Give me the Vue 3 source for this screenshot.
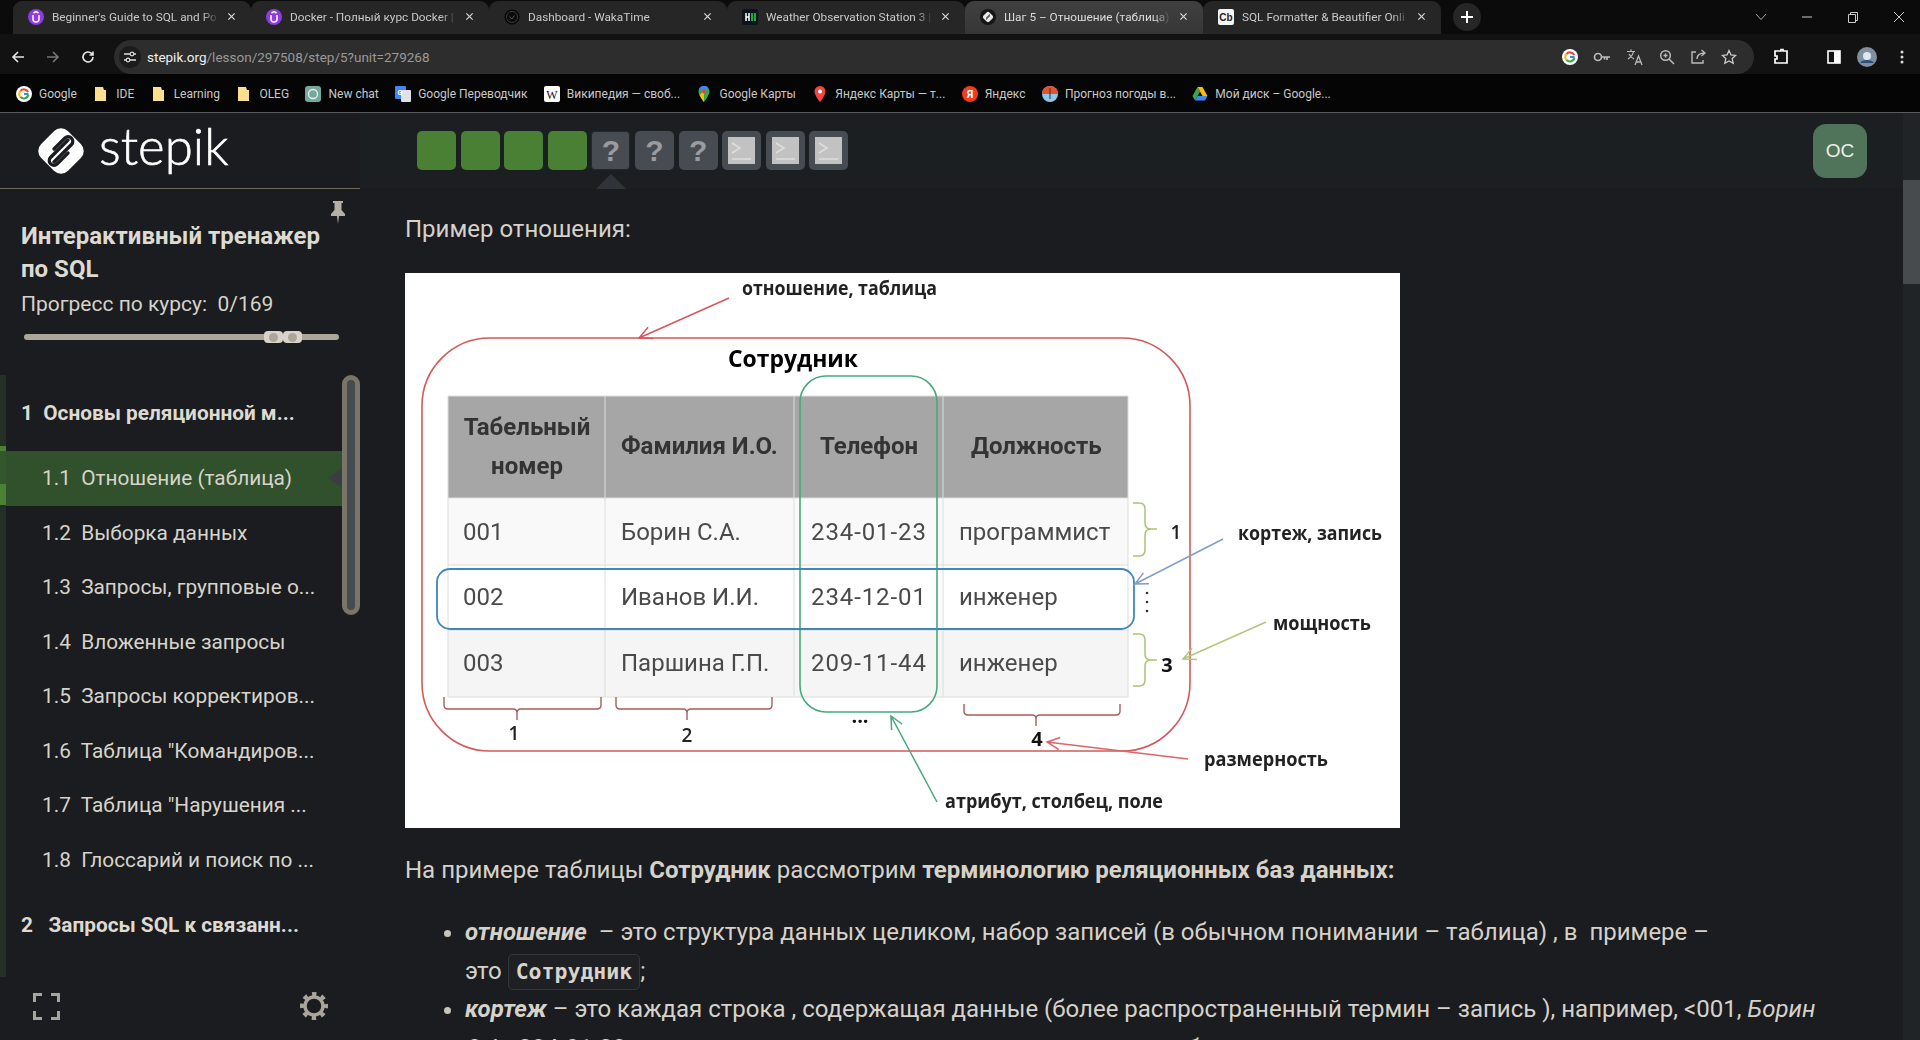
<template>
  <div class="page">
    <!-- browser chrome -->
    <div class="tabstrip">
      <div
        v-for="tab in tabs"
        :key="tab.title"
        class="tab"
        :class="{ active: tab.active }"
      >
        <svg class="favicon" viewBox="0 0 16 16">
          <template v-if="tab.icon === 'udemy'">
            <circle cx="8" cy="8" r="8" fill="#8c3ce0" />
            <path d="M5 6v4a3 3 0 0 0 6 0V6M5.5 4 8 2.6 10.5 4" fill="none" stroke="#fff" stroke-width="1.5" />
          </template>
          <template v-else-if="tab.icon === 'waka'">
            <circle cx="8" cy="8" r="7" fill="#0b0b0b" stroke="#000" />
            <circle cx="8" cy="8" r="5.6" fill="none" stroke="#3a3a3a" stroke-width="1" />
            <path d="M5.5 7.5 8 10l2.5-3.5" fill="none" stroke="#555" stroke-width="1" />
          </template>
          <template v-else-if="tab.icon === 'hr'">
            <rect width="16" height="16" rx="2" fill="#0e141e" />
            <path d="M4 4v8M7 4v8M4 8h3" stroke="#fff" stroke-width="1.5" />
            <path d="M10 4v8M13 4v8" stroke="#1ba94c" stroke-width="2" />
          </template>
          <template v-else-if="tab.icon === 'stepik'">
            <circle cx="8" cy="8" r="8" fill="#151515" />
            <rect x="3.8" y="3.8" width="8.4" height="8.4" rx="2" transform="rotate(45 8 8)" fill="#e8e8e8" />
            <path d="M10 5.5 6.2 9.2M9.800 6.800 6 10.500" stroke="#222" stroke-width="1" />
          </template>
          <template v-else>
            <rect width="16" height="16" rx="2" fill="#f5f5f5" />
            <text x="8" y="12" class="cb">Cb</text>
          </template>
        </svg>
        <span class="tab-title">{{ tab.title }}</span>
        <svg class="tab-close" viewBox="0 0 10 10"><path d="M1.5 1.5l7 7M8.5 1.5l-7 7" stroke="#d8d8d8" stroke-width="1.3" /></svg>
      </div>
      <div class="newtab">
        <svg viewBox="0 0 14 14" width="14" height="14"><path d="M7 1v12M1 7h12" stroke="#fff" stroke-width="2" /></svg>
      </div>
      <div class="window-btns">
        <svg viewBox="0 0 12 8" width="12" height="8"><path d="M1 1l5 5.5L11 1" fill="none" stroke="#aaa" /></svg>
        <svg viewBox="0 0 12 12" width="12" height="12"><path d="M1 6h10" stroke="#ccc" /></svg>
        <svg viewBox="0 0 12 12" width="12" height="12"><path d="M1.5 3.5h7v8h-7zM3.5 3.5v-2h7v8h-2" fill="none" stroke="#ccc" /></svg>
        <svg viewBox="0 0 12 12" width="12" height="12"><path d="M1 1l10 10M11 1L1 11" stroke="#ccc" /></svg>
      </div>
    </div>

    <div class="toolbar">
      <svg class="nav-icon" viewBox="0 0 14 14"><path d="M13 7H2M7 2 2 7l5 5" fill="none" stroke="#e6e6e6" stroke-width="1.6" /></svg>
      <svg class="nav-icon" viewBox="0 0 14 14"><path d="M1 7h11M7 2l5 5-5 5" fill="none" stroke="#777" stroke-width="1.6" /></svg>
      <svg class="nav-icon" viewBox="0 0 14 14"><path d="M12 7a5 5 0 1 1-1.5-3.600L12 5M12 1.500V5H8.500" fill="none" stroke="#e6e6e6" stroke-width="1.6" /></svg>
      <div class="urlbar">
        <span class="site-info">
          <svg viewBox="0 0 14 14" width="14" height="14"><path d="M1 4h6M11 4h2M1 10h2M7 10h6" stroke="#ddd" stroke-width="1.3" fill="none" /><circle cx="9" cy="4" r="1.8" stroke="#ddd" fill="none" stroke-width="1.2" /><circle cx="5" cy="10" r="1.8" stroke="#ddd" fill="none" stroke-width="1.2" /></svg>
        </span>
        <span class="url"><span class="host">stepik.org</span>/lesson/297508/step/5?unit=279268</span>
        <span class="url-icons">
          <svg viewBox="0 0 16 16" width="16" height="16"><circle cx="8" cy="8" r="8" fill="#fff" /><path d="M12.5 8H8" stroke="#4285f4" stroke-width="2" /><path d="M12.2 6A4.600 4.600 0 0 0 4.500 5" fill="none" stroke="#ea4335" stroke-width="2" /><path d="M4.5 5a4.600 4.600 0 0 0 0 6" fill="none" stroke="#fbbc05" stroke-width="2" /><path d="M4.5 11a4.600 4.600 0 0 0 7.900-2.500" fill="none" stroke="#34a853" stroke-width="2" /></svg>
          <svg viewBox="0 0 18 12" width="18" height="12"><circle cx="5" cy="6" r="3.5" fill="none" stroke="#bbb" stroke-width="1.7" /><path d="M8.5 6h8.500M14 6v3M11.500 6v2.500" stroke="#bbb" stroke-width="1.7" /></svg>
          <svg viewBox="0 0 18 18" width="18" height="18"><path d="M1 3.5h8M5 1.500v2M7.500 3.500C7 6.500 5 9 2 11M3 6c1 2 3 4 5 5" fill="none" stroke="#bbb" stroke-width="1.2" /><path d="M9 17l3.5-9 3.5 9M10.300 14h4.400" fill="none" stroke="#bbb" stroke-width="1.3" /></svg>
          <svg viewBox="0 0 16 16" width="16" height="16"><circle cx="6.5" cy="6.5" r="4.8" fill="none" stroke="#bbb" stroke-width="1.5" /><path d="M10 10l5 5M4.500 6.500h4M6.500 4.500v4" stroke="#bbb" stroke-width="1.5" /></svg>
          <svg viewBox="0 0 16 16" width="16" height="16"><path d="M6 3H2v11h11v-3M7 10c0-4 2-6 8-6M11.500 1 15 4l-3.500 3" fill="none" stroke="#bbb" stroke-width="1.4" /></svg>
          <svg viewBox="0 0 16 16" width="16" height="16"><path d="M8 1.5l2 4.400 4.700.5-3.500 3.200 1 4.700L8 11.900l-4.200 2.400 1-4.700L1.300 6.400 6 5.900z" fill="none" stroke="#ccc" stroke-width="1.3" /></svg>
        </span>
      </div>
      <div class="tool-right">
        <svg viewBox="0 0 16 18" width="16" height="18"><path d="M5 3h3V1.500h2V3h4v12H2v-4h2V8H2V3z" fill="none" stroke="#fff" stroke-width="1.7" /></svg>
        <svg class="panel-icon" viewBox="0 0 14 14" width="14" height="14"><rect x="1" y="1" width="12" height="12" fill="none" stroke="#fff" stroke-width="1.6" /><rect x="7" y="1" width="6" height="12" fill="#fff" /></svg>
        <svg class="profile-icon" viewBox="0 0 20 20" width="20" height="20"><circle cx="10" cy="10" r="10" fill="#8090a0" /><circle cx="10" cy="9" r="4" fill="#dfe6ee" /><path d="M3 16c2-4 12-4 14 0" fill="#28507c" /></svg>
        <svg class="dots-icon" viewBox="0 0 4 14" width="4" height="14"><circle cx="2" cy="2" r="1.5" fill="#ddd" /><circle cx="2" cy="7" r="1.5" fill="#ddd" /><circle cx="2" cy="12" r="1.5" fill="#ddd" /></svg>
      </div>
    </div>

    <div class="bookmarks">
      <div v-for="b in bookmarks" :key="b.title" class="bookmark">
        <svg class="favicon" viewBox="0 0 16 16">
          <template v-if="b.icon === 'google'">
            <circle cx="8" cy="8" r="8" fill="#fff" />
            <path d="M12.5 8H8" stroke="#4285f4" stroke-width="2" /><path d="M12.2 6A4.600 4.600 0 0 0 4.500 5" fill="none" stroke="#ea4335" stroke-width="2" /><path d="M4.5 5a4.600 4.600 0 0 0 0 6" fill="none" stroke="#fbbc05" stroke-width="2" /><path d="M4.5 11a4.600 4.600 0 0 0 7.900-2.500" fill="none" stroke="#34a853" stroke-width="2" />
          </template>
          <path v-else-if="b.icon === 'folder'" d="M2 1h8l1 3h2v11H2z" fill="#fbdf8f" />
          <template v-else-if="b.icon === 'gpt'">
            <rect width="16" height="16" rx="3" fill="#74aa9c" />
            <circle cx="8" cy="8" r="4.5" fill="none" stroke="#e8f0ee" stroke-width="1.3" />
          </template>
          <template v-else-if="b.icon === 'translate'">
            <rect width="11" height="13" rx="1" fill="#4285f4" />
            <rect x="6" y="4" width="10" height="12" rx="1" fill="#dfe3e8" />
            <text x="5" y="9" class="mini">G</text>
          </template>
          <template v-else-if="b.icon === 'wiki'">
            <rect width="16" height="16" rx="2" fill="#fff" />
            <text x="8" y="12.5" class="wiki">W</text>
          </template>
          <template v-else-if="b.icon === 'maps'">
            <path d="M8 0a5.5 5.5 0 0 0-5.5 5.5C2.5 9.500 8 16 8 16s5.500-6.500 5.500-10.500A5.500 5.500 0 0 0 8 0z" fill="#34a853" />
            <path d="M3 3a5.5 5.5 0 0 1 9-1.500L8 6z" fill="#4285f4" />
            <path d="M8 16S5 12.500 3.500 9L8 5z" fill="#fbbc05" />
            <circle cx="8" cy="5.5" r="2" fill="#ea4335" />
          </template>
          <template v-else-if="b.icon === 'ymaps'">
            <path d="M8 0a5.5 5.5 0 0 0-5.5 5.5C2.5 9.500 8 16 8 16s5.500-6.500 5.500-10.500A5.500 5.500 0 0 0 8 0z" fill="#f2453d" />
            <circle cx="8" cy="5.5" r="2" fill="#fff" />
          </template>
          <template v-else-if="b.icon === 'yandex'">
            <circle cx="8" cy="8" r="8" fill="#f33b1d" />
            <text x="8" y="12" class="ya">Я</text>
          </template>
          <template v-else-if="b.icon === 'weather'">
            <circle cx="8" cy="8" r="8" fill="#8dc8ec" />
            <path d="M0 8a8 8 0 0 1 16 0z" fill="#e2542f" />
            <path d="M8 2v11" stroke="#333" stroke-width="1" />
          </template>
          <template v-else>
            <path d="M5.5 1h5l5 9h-5z" fill="#fbbc05" />
            <path d="M5.5 1 0.5 10l2.500 4.500 5-9z" fill="#34a853" />
            <path d="M3 14.5h10l2.500-4.500h-10z" fill="#4285f4" />
          </template>
        </svg>
        <span>{{ b.title }}</span>
      </div>
    </div>

    <div class="body">
      <aside class="sidebar">
        <div class="logo">
          <svg class="logo-mark" viewBox="0 0 48 48">
            <rect x="5" y="5" width="38" height="38" rx="10" transform="rotate(45 24 24)" fill="#fff" />
            <path d="M31 13 13.5 30.500A4.600 4.600 0 0 0 20 37L31 26" fill="none" stroke="#1a1c1f" stroke-width="3.4" stroke-linecap="round" />
            <path d="M17 35 34.5 17.500A4.600 4.600 0 0 0 28 11L17 22" fill="none" stroke="#1a1c1f" stroke-width="3.4" stroke-linecap="round" />
          </svg>
          <span class="logo-text">stepik</span>
        </div>

        <div class="course">
          <svg class="pin" viewBox="0 0 16 24"><path d="M3 1h10v2h-1.5v7L15 14v2H9l-1 8-1-8H1v-2l3.500-4V3H3z" fill="#b5afa5" /></svg>
          <h1 class="course-title">Интерактивный тренажер<br />по SQL</h1>
          <div class="course-progress">Прогресс по курсу:&nbsp; 0/169</div>
          <div class="slider">
            <span class="knob"><i /></span>
            <span class="knob"><i /></span>
          </div>
        </div>

        <div class="modules">
          <div class="strip">
            <div class="seg dark" style="height: 71px" />
            <div class="seg bright" style="height: 5px" />
            <div class="seg mid" style="height: 33px" />
            <div class="seg bright" style="height: 21px" />
            <div class="seg dark rest" />
          </div>
          <div class="module-list">
            <template v-for="row in rows" :key="row.text">
              <div v-if="row.head" class="row-head">{{ row.text }}</div>
              <div v-else class="row-item" :class="{ active: row.active }">
                {{ row.text }}
                <span v-if="row.active" class="row-arrow" />
              </div>
            </template>
          </div>
          <div class="side-scroll"><div class="side-thumb" /></div>
        </div>

        <div class="side-foot">
          <svg viewBox="0 0 27 27" width="27" height="27"><path d="M1.5 9V1.500H9M18 1.500h7.500V9M25.500 18v7.500H18M9 25.500H1.500V18" fill="none" stroke="#aaa59b" stroke-width="3" /></svg>
          <svg viewBox="0 0 28 28" width="28" height="28">
            <circle cx="14" cy="14" r="9" fill="none" stroke="#aaa59b" stroke-width="3.5" />
            <circle cx="14" cy="14" r="12" fill="none" stroke="#aaa59b" stroke-width="4" stroke-dasharray="4.4 5" stroke-dashoffset="2.2" />
          </svg>
        </div>
      </aside>

      <main class="main">
        <div class="steps">
          <div class="step-row">
            <div
              v-for="(s, i) in steps"
              :key="i"
              class="step"
              :class="[s, { current: i === 4 }]"
            >
              <template v-if="s === 'quiz'">?</template>
              <svg v-else-if="s === 'code'" viewBox="0 0 27 27" width="27" height="27">
                <rect width="27" height="27" fill="#c2c2c2" />
                <path d="M4 6l8 5-8 5M4 22h19" fill="none" stroke="#dedede" stroke-width="1.6" />
              </svg>
              <span v-if="i === 4" class="step-mark" />
            </div>
          </div>
          <div class="avatar">ОС</div>
        </div>

        <div class="content">
          <p class="first">Пример отношения:</p>

          <svg class="diagram" viewBox="0 0 995 555" width="995" height="555">
            <rect width="995" height="555" fill="#fff" />
            <rect x="17" y="65" width="768" height="413" rx="68" fill="none" stroke="#d25a5a" stroke-width="1.6" />

            <!-- table -->
            <rect x="43" y="123" width="680" height="102" fill="#a6a6a6" />
            <rect x="43" y="225" width="680" height="67" fill="#f9f9f9" />
            <rect x="43" y="292" width="680" height="65" fill="#fff" />
            <rect x="43" y="357" width="680" height="67" fill="#f5f5f5" />
            <path d="M43 123H723V424H43ZM200 123V424M389 123V424M538 123V424M43 225H723M43 292H723M43 357H723" fill="none" stroke="#ddd" stroke-width="1" />

            <text
              v-for="t in cells"
              :key="t.text + t.x + t.y"
              :x="t.x"
              :y="t.y"
              :text-anchor="t.mid ? 'middle' : 'start'"
              class="cell"
              :class="{ th: t.th, phone: t.phone }"
            >{{ t.text }}</text>

            <rect x="395" y="103" width="137" height="336" rx="26" fill="none" stroke="#46a97e" stroke-width="1.6" />
            <rect x="32" y="296" width="697" height="60" rx="13" fill="none" stroke="#3f88b8" stroke-width="1.8" />

            <!-- brackets under columns -->
            <path d="M39 424v8q0 4 4 4H108q4 0 4 4v7M112 440q0-4 4-4H192q4 0 4-4v-8" fill="none" stroke="#a85c5c" stroke-width="1.4" />
            <path d="M211 424v8q0 4 4 4H278q4 0 4 4v7M282 440q0-4 4-4H363q4 0 4-4v-8" fill="none" stroke="#a85c5c" stroke-width="1.4" />
            <path d="M559 431v7q0 4 4 4H627q4 0 4 4v7M631 446q0-4 4-4H711q4 0 4-4v-7" fill="none" stroke="#a85c5c" stroke-width="1.4" />

            <!-- braces on the right -->
            <path d="M728 230h6q6 0 6 6v14q0 6 6 6h6M746 256q-6 0-6 6v15q0 6-6 6h-6" fill="none" stroke="#a9c274" stroke-width="1.5" />
            <path d="M728 361h6q6 0 6 6v14q0 6 6 6h6M746 387q-6 0-6 6v14q0 6-6 6h-6" fill="none" stroke="#a9c274" stroke-width="1.5" />

            <path v-for="a in arrows" :key="a.color + a.x1" :d="arrowPath(a)" fill="none" :stroke="a.color" stroke-width="1.5" />

            <text
              v-for="l in labels"
              :key="l.text"
              :x="l.x"
              :y="l.y"
              :textLength="l.w"
              lengthAdjust="spacingAndGlyphs"
              class="label"
              :class="l.cls"
            >{{ l.text }}</text>

            <text x="109" y="467" class="num">1</text>
            <text x="282" y="469" class="num">2</text>
            <text x="771" y="266" class="num">1</text>
            <text x="762" y="399" class="num bold">3</text>
            <text x="632" y="473" class="num bold">4</text>
            <text x="455" y="450" class="num bold">...</text>
            <circle cx="742" cy="320" r="1.3" fill="#333" />
            <circle cx="742" cy="329" r="1.3" fill="#333" />
            <circle cx="742" cy="338" r="1.3" fill="#333" />
          </svg>

          <p class="intro">На примере таблицы <b>Сотрудник</b> рассмотрим <b>терминологию реляционных баз данных:</b></p>

          <ul class="terms">
            <li>
              <b><i>отношение</i></b>&nbsp; – это структура данных целиком, набор записей (в обычном понимании – таблица) , в&nbsp; примере –<br />это <code>Сотрудник</code>;
            </li>
            <li>
              <b><i>кортеж</i></b> – это каждая строка , содержащая данные (более распространенный термин – запись ), например, &lt;001, <i>Борин</i><br /><i>С.А.</i>, 234-01-23, программист&gt;; все кортежи отношения должны быть различны;
            </li>
          </ul>
        </div>
      </main>

      <div class="page-scroll"><div class="page-thumb" /></div>
    </div>
  </div>
</template>

<script setup>
const tabs = [
  { title: "Beginner's Guide to SQL and Po", icon: 'udemy' },
  { title: 'Docker - Полный курс Docker |', icon: 'udemy' },
  { title: 'Dashboard - WakaTime', icon: 'waka' },
  { title: 'Weather Observation Station 3 |', icon: 'hr' },
  { title: 'Шаг 5 – Отношение (таблица)', icon: 'stepik', active: true },
  { title: 'SQL Formatter & Beautifier Onli', icon: 'cb' }
]

const bookmarks = [
  { title: 'Google', icon: 'google' },
  { title: 'IDE', icon: 'folder' },
  { title: 'Learning', icon: 'folder' },
  { title: 'OLEG', icon: 'folder' },
  { title: 'New chat', icon: 'gpt' },
  { title: 'Google Переводчик', icon: 'translate' },
  { title: 'Википедия — своб...', icon: 'wiki' },
  { title: 'Google Карты', icon: 'maps' },
  { title: 'Яндекс Карты — т...', icon: 'ymaps' },
  { title: 'Яндекс', icon: 'yandex' },
  { title: 'Прогноз погоды в...', icon: 'weather' },
  { title: 'Мой диск – Google...', icon: 'drive' }
]

const rows = [
  { text: '1  Основы реляционной м...', head: true },
  { text: '1.1  Отношение (таблица)', active: true },
  { text: '1.2  Выборка данных' },
  { text: '1.3  Запросы, групповые о...' },
  { text: '1.4  Вложенные запросы' },
  { text: '1.5  Запросы корректиров...' },
  { text: '1.6  Таблица "Командиров...' },
  { text: '1.7  Таблица "Нарушения ...' },
  { text: '1.8  Глоссарий и поиск по ...' },
  { text: '2   Запросы SQL к связанн...', head: true }
]

const steps = ['done', 'done', 'done', 'done', 'quiz', 'quiz', 'quiz', 'code', 'code', 'code']

const cells = [
  { text: 'Табельный', x: 122, y: 162, mid: true, th: true },
  { text: 'номер', x: 122, y: 201, mid: true, th: true },
  { text: 'Фамилия И.О.', x: 216, y: 181, th: true },
  { text: 'Телефон', x: 415, y: 181, th: true },
  { text: 'Должность', x: 566, y: 181, th: true },
  { text: '001', x: 58, y: 267 },
  { text: 'Борин С.А.', x: 216, y: 267 },
  { text: '234-01-23', x: 406, y: 267, phone: true },
  { text: 'программист', x: 554, y: 267 },
  { text: '002', x: 58, y: 332 },
  { text: 'Иванов И.И.', x: 216, y: 332 },
  { text: '234-12-01', x: 406, y: 332, phone: true },
  { text: 'инженер', x: 554, y: 332 },
  { text: '003', x: 58, y: 398 },
  { text: 'Паршина Г.П.', x: 216, y: 398 },
  { text: '209-11-44', x: 406, y: 398, phone: true },
  { text: 'инженер', x: 554, y: 398 }
]

const labels = [
  { text: 'отношение, таблица', x: 337, y: 22, w: 195 },
  { text: 'Сотрудник', x: 323, y: 94, w: 130, cls: 'big' },
  { text: 'кортеж, запись', x: 833, y: 267, w: 144 },
  { text: 'мощность', x: 868, y: 357, w: 98 },
  { text: 'размерность', x: 799, y: 493, w: 124 },
  { text: 'атрибут, столбец, поле', x: 540, y: 535, w: 218 }
]

const arrows = [
  { x1: 324, y1: 25, x2: 234, y2: 65, color: '#d9565a' },
  { x1: 818, y1: 266, x2: 730, y2: 311, color: '#7f9ecb' },
  { x1: 861, y1: 349, x2: 778, y2: 386, color: '#b4c67d' },
  { x1: 783, y1: 486, x2: 642, y2: 469, color: '#d9666a' },
  { x1: 532, y1: 529, x2: 486, y2: 443, color: '#46a97e' }
]

// line with a small open head at the far end
const arrowPath = ({ x1, y1, x2, y2 }) => {
  const angle = Math.atan2(y1 - y2, x1 - x2)
  const head = 14
  const spread = 0.45
  const ax = x2 + head * Math.cos(angle + spread)
  const ay = y2 + head * Math.sin(angle + spread)
  const bx = x2 + head * Math.cos(angle - spread)
  const by = y2 + head * Math.sin(angle - spread)
  return `M${x1} ${y1}L${x2} ${y2}M${ax} ${ay}L${x2} ${y2}L${bx} ${by}`
}
</script>

<style>
html,
body {
  margin: 0;
  background: #1a1c1f;
}
</style>

<style scoped>
.page {
  width: 1920px;
  height: 1040px;
  overflow: hidden;
  display: flex;
  flex-direction: column;
  font-family: Roboto, "Noto Sans", sans-serif;
  color: #d6d2ca;
  background: #1a1c1f;
}

/* tabs */
.tabstrip {
  height: 34px;
  display: flex;
  align-items: flex-end;
  padding-left: 13px;
  background: #0b0b0b;
}
.tab {
  width: 238px;
  height: 33px;
  box-sizing: border-box;
  display: flex;
  align-items: center;
  gap: 8px;
  padding: 0 15px 2px 15px;
  margin-top: 1px;
  border-radius: 9px 9px 0 0;
  background: #262626;
  font-size: 11.8px;
  color: #c9c9c9;
}
.tab.active {
  background: linear-gradient(#404040, #363636);
  color: #dcdcdc;
}
.favicon {
  width: 16px;
  height: 16px;
  flex: none;
}
.tab-title {
  flex: 1;
  min-width: 0;
  white-space: nowrap;
  mask-image: linear-gradient(to right, #000 90%, transparent);
}
.tab-close {
  width: 9px;
  height: 9px;
  flex: none;
}
.newtab {
  width: 28px;
  height: 28px;
  margin: 0 0 3px 12px;
  border-radius: 50%;
  background: #262626;
  display: flex;
  align-items: center;
  justify-content: center;
}
.window-btns {
  margin-left: 274px;
  align-self: stretch;
  display: flex;
  align-items: center;
  gap: 34px;
}
.cb {
  font: bold 10px "Liberation Sans", sans-serif;
  text-anchor: middle;
  fill: #222;
}
.mini {
  font: bold 7px Roboto, sans-serif;
  text-anchor: middle;
  fill: #fff;
}
.wiki {
  font: 12px "Liberation Serif", serif;
  text-anchor: middle;
  fill: #111;
}
.ya {
  font: bold 11px Roboto, sans-serif;
  text-anchor: middle;
  fill: #fff;
}

/* address bar */
.toolbar {
  height: 40px;
  box-sizing: border-box;
  padding: 6px 0 0 11px;
  display: flex;
  align-items: center;
  gap: 21px;
  background: #121212;
}
.nav-icon {
  width: 14px;
  height: 14px;
  flex: none;
}
.urlbar {
  width: 1640px;
  height: 34px;
  margin-left: -2px;
  box-sizing: border-box;
  display: flex;
  align-items: center;
  padding: 0 17px 0 5px;
  border-radius: 17px;
  background: #2d2d2d;
  font-size: 13.5px;
  color: #9a9a9a;
  flex: none;
}
.site-info {
  width: 22px;
  height: 22px;
  border-radius: 50%;
  background: #1c1c1c;
  display: flex;
  align-items: center;
  justify-content: center;
  margin-right: 6px;
}
.host {
  color: #f0f0f0;
}
.url-icons {
  margin-left: auto;
  display: flex;
  align-items: center;
  gap: 15px;
}
.tool-right {
  display: flex;
  align-items: center;
  margin-left: -2px;
}
.panel-icon {
  margin-left: 38px;
}
.profile-icon {
  margin-left: 16px;
}
.dots-icon {
  margin-left: 23px;
}

/* bookmarks */
.bookmarks {
  height: 39px;
  box-sizing: border-box;
  border-bottom: 1px solid #5a5a5a;
  padding: 2px 0 0 16px;
  display: flex;
  align-items: center;
  gap: 16.4px;
  background: #050505;
  font-size: 12px;
  color: #c8c8c8;
}
.bookmark {
  display: flex;
  align-items: center;
  gap: 7px;
  white-space: nowrap;
}

.body {
  flex: 1;
  min-height: 0;
  display: flex;
}

/* sidebar */
.sidebar {
  width: 360px;
  flex: none;
  display: flex;
  flex-direction: column;
}
.logo {
  height: 75px;
  border-bottom: 1px solid #6d675c;
  display: flex;
  align-items: center;
  padding-left: 37px;
  gap: 14px;
}
.logo-mark {
  width: 48px;
  height: 48px;
  flex: none;
}
.logo-text {
  font-family: Lato, sans-serif;
  font-weight: 300;
  font-size: 51px;
  line-height: 1;
  color: #fff;
  margin-top: -11px;
  -webkit-text-stroke: 0.6px #fff;
}
.course {
  position: relative;
  height: 186px;
  box-sizing: border-box;
  padding: 31px 0 0 21px;
}
.pin {
  position: absolute;
  right: 14px;
  top: 11px;
  width: 16px;
  height: 24px;
}
.course-title {
  margin: 0;
  font-size: 24px;
  line-height: 33px;
  font-weight: 700;
  color: #dedad2;
}
.course-progress {
  font-size: 21px;
  line-height: 36px;
}
.slider {
  margin: 12px 0 0 3px;
  width: 315px;
  height: 6px;
  border-radius: 3px;
  background: #aca69a;
  display: flex;
  align-items: center;
  padding-left: 240px;
  box-sizing: border-box;
}
.knob {
  width: 19px;
  height: 12px;
  flex: none;
  border-radius: 4px;
  background: #d8d3c9;
  display: flex;
  align-items: center;
  justify-content: center;
}
.knob i {
  width: 9px;
  height: 9px;
  border-radius: 50%;
  background: #aca69a;
}
.modules {
  height: 602px;
  display: flex;
  overflow: hidden;
}
.strip {
  width: 6px;
  flex: none;
  display: flex;
  flex-direction: column;
}
.seg.dark {
  background: #262f26;
}
.seg.bright {
  background: #4a8234;
}
.seg.mid {
  background: #33562c;
}
.seg.rest {
  flex: 1;
}
.module-list {
  flex: 1;
  min-width: 0;
  font-size: 20.8px;
  white-space: pre;
  color: #d8d4cc;
}
.row-head {
  height: 76px;
  line-height: 76px;
  padding-left: 15px;
  font-weight: 700;
  color: #dedad2;
}
.row-item {
  position: relative;
  height: 54.5px;
  line-height: 54px;
  padding-left: 36px;
}
.row-item.active {
  background: #30512b;
}
.row-arrow {
  position: absolute;
  right: 0;
  top: 17px;
  border: 10px solid transparent;
  border-left: 0;
  border-right: 14px solid #3a3e42;
}
.side-scroll {
  width: 18px;
  flex: none;
}
.side-thumb {
  height: 240px;
  box-sizing: border-box;
  border: 5px solid #7b7569;
  border-radius: 9px;
  background: #454b52;
}
.side-foot {
  flex: 1;
  display: flex;
  align-items: center;
  justify-content: space-between;
  padding: 0 32px 5px 33px;
}

/* main column */
.main {
  flex: 1;
  min-width: 0;
  display: flex;
  flex-direction: column;
}
.steps {
  height: 75px;
  flex: none;
  display: flex;
  align-items: center;
  justify-content: space-between;
  padding: 0 36px 0 57px;
  background: #1c1f21;
}
.step-row {
  display: flex;
  gap: 4.6px;
}
.step {
  position: relative;
  width: 39px;
  height: 39px;
  box-sizing: border-box;
  border-radius: 5px;
  display: flex;
  align-items: center;
  justify-content: center;
  background: #474c52;
  font: bold 30px "Liberation Sans", sans-serif;
  color: #9a9c9f;
}
.step.done {
  background: #4a8034;
}
.step.current {
  border: 1px solid #25282b;
  border-radius: 4px;
}
.step-mark {
  position: absolute;
  left: 4px;
  top: 42px;
  border: 15px solid transparent;
  border-top: 0;
  border-bottom: 15px solid #30343a;
}
.avatar {
  width: 54px;
  height: 54px;
  border-radius: 13px;
  background: #4f7459;
  display: flex;
  align-items: center;
  justify-content: center;
  font: 19px "Liberation Sans", sans-serif;
  color: #eee;
}
.content {
  padding: 22px 0 0 45px;
  font-size: 24px;
  line-height: 38.5px;
}
.content p {
  margin: 0;
}
.diagram {
  display: block;
  margin-top: 24px;
  filter: blur(0.35px);
}
.content .intro {
  margin-top: 23px;
}
.terms {
  margin: 24px 0 0;
  padding: 0 0 0 60px;
}
.terms li::marker {
  color: #c8c4bc;
}
code {
  display: inline-block;
  height: 36px;
  box-sizing: border-box;
  padding: 0 7px;
  border: 1px solid #33363a;
  border-radius: 5px;
  background: #1e2023;
  font: bold 21.5px/34px "DejaVu Sans Mono", monospace;
  color: #d8d4cc;
}
.cell {
  font: 24px Roboto, sans-serif;
  fill: #4a4a4a;
}
.cell.th {
  font-weight: 700;
  fill: #333;
}
.cell.phone {
  letter-spacing: 0.9px;
}
.label {
  font: bold 19px "Open Sans", sans-serif;
  fill: #222;
}
.label.big {
  font-size: 24px;
  fill: #000;
}
.num {
  font: 600 19px "Open Sans", sans-serif;
  fill: #222;
  text-anchor: middle;
}
.num.bold {
  font-weight: 700;
  font-size: 20px;
  fill: #111;
}
.page-scroll {
  width: 17px;
  flex: none;
  background: #202426;
  padding-top: 67px;
  box-sizing: border-box;
}
.page-thumb {
  height: 104px;
  background: #474b4e;
}
</style>
